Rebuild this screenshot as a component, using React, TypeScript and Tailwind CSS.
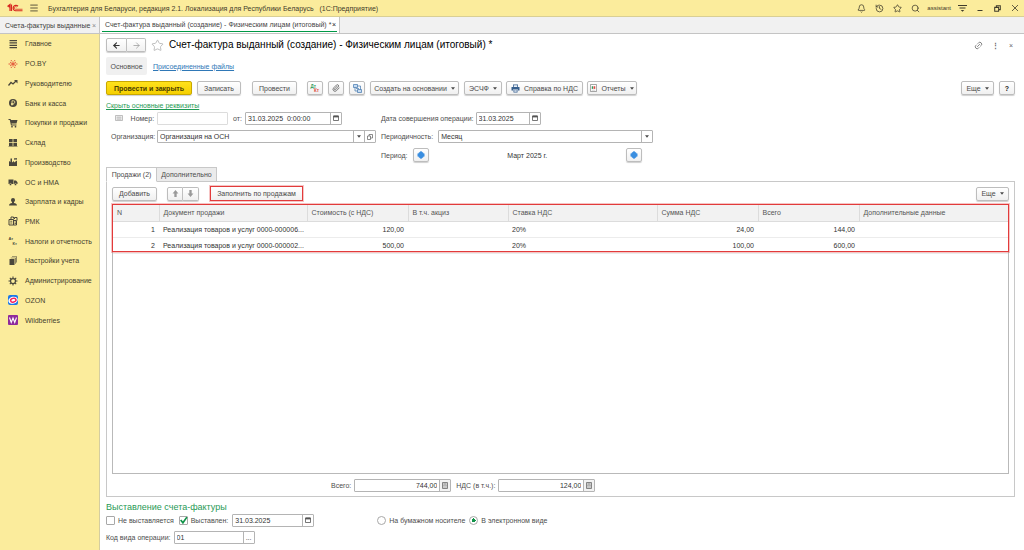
import type { ReactNode } from 'react';
import { ArrowLeft, ArrowRight, Bell, History, Link2, Menu, Paperclip, Search, Star } from 'lucide-react';

const btn =
  'flex h-[14px] shrink-0 items-center justify-center gap-1 whitespace-nowrap rounded-[2px] border border-[#bdbdbd] bg-linear-to-b from-white to-[#f0f0f0] text-[#4a4a4a] shadow-[0_1px_1px_#d0d0d0]';
const box = 'flex h-[13px] overflow-hidden rounded-[1px] border border-[#b4b4b4] bg-white';
const inner = 'flex h-full w-[11px] shrink-0 items-center justify-center border-l border-[#b4b4b4] text-[#404040]';
const field = 'h-full w-0 min-w-0 flex-1 appearance-none bg-transparent px-[2px] leading-[11px] text-[#333] outline-none';

function Caret() {
  return (
    <svg viewBox="0 0 6 4" className="h-[3px] w-[4px]" fill="#4a4a4a">
      <path d="M0 0h6L3 4z" />
    </svg>
  );
}

function CalendarIcon() {
  return (
    <svg viewBox="0 0 12 12" className="size-[6px]" fill="none" stroke="#555">
      <path d="M1 2h10v9H1z" strokeWidth="1.6" />
      <path d="M1 3h10" strokeWidth="3.6" />
    </svg>
  );
}

function CalculatorIcon() {
  return (
    <svg viewBox="0 0 12 14" className="h-[7px] w-[6px]">
      <path d="M1 1h10v12H1z" fill="#ddd" stroke="#777" strokeWidth="1.8" />
      <path d="M3 4h6M3 7h1.5M5.5 7H7M8 7h1M3 10h1.5M5.5 10H7M8 10h1" stroke="#777" strokeWidth="1.6" />
    </svg>
  );
}

function Icon({ children }: { children: ReactNode }) {
  return (
    <svg viewBox="0 0 20 20" className="size-[10px] shrink-0" fill="#4a473c" aria-hidden="true">
      {children}
    </svg>
  );
}

const sections: { name: string; icon: ReactNode }[] = [
  { name: 'Главное', icon: <path d="M3 2h15v2.4H3zM3 6.7h15v2.4H3zM3 11.4h15v2.4H3zM3 16h15v2.4H3z" /> },
  {
    name: 'PO.BY',
    icon: (
      <g stroke="#e0452f" strokeWidth="1.7" fill="#e0452f">
        <path d="M10 8V5M10 12v3M8 9 4 6M12 9l4-3M8 11l-4 3M12 11l4 3M1 10h4M15 10h4M6 2l1.500 2.500M14 2l-1.500 2.500M6 18l1.500-2.500M14 18l-1.500-2.500" />
        <circle cx="10" cy="10" r="1.6" />
      </g>
    ),
  },
  {
    name: 'Руководителю',
    icon: (
      <>
        <path d="m1 15 5-6 4 3 6-6" fill="none" stroke="#4a473c" strokeWidth="2.6" />
        <path d="M12 4h7v7z" />
      </>
    ),
  },
  {
    name: 'Банк и касса',
    icon: (
      <>
        <circle cx="10" cy="10" r="8" />
        <path d="M8 15V5.5h3a2.6 2.6 0 0 1 0 5.4H6M6 13h5" fill="none" stroke="#fbec9c" strokeWidth="1.6" />
      </>
    ),
  },
  {
    name: 'Покупки и продажи',
    icon: (
      <>
        <path d="M1 2h4l1 2h13l-2 7H7l.5 2H17v2H6L3.5 4H1z" />
        <circle cx="8" cy="17.3" r="1.7" />
        <circle cx="15" cy="17.3" r="1.7" />
      </>
    ),
  },
  { name: 'Склад', icon: <path d="M2 2h7.2v6.600H2zM10.800 2H18v6.600h-7.200zM2 10h7.200v6H2zM10.800 10H18v6h-7.200zM1 17h18v1H1z" /> },
  { name: 'Производство', icon: <path d="M2 18V8l3 2V3h3v8l4-3v3l6-4v11zM12 3c2-2 3 1 6-1v3c-3 1-4-1-6 1z" /> },
  {
    name: 'ОС и НМА',
    icon: (
      <>
        <path d="M1 5h10v9H1zM12 7h4l3 3.5V14h-7z" />
        <circle cx="5" cy="15" r="2.2" stroke="#fbec9c" />
        <circle cx="15" cy="15" r="2.2" stroke="#fbec9c" />
      </>
    ),
  },
  { name: 'Зарплата и кадры', icon: <path d="M10 2a4 4 0 0 1 4 4c0 2-1 3.500-2 4.200V12c3 .6 6 1.500 6 5H2c0-3.500 3-4.400 6-5v-1.800C7 9.500 6 8 6 6a4 4 0 0 1 4-4z" /> },
  {
    name: 'РМК',
    icon: (
      <g fill="none" stroke="#4a473c" strokeWidth="2">
        <path d="M2 7h9v11H2zM6 7V2h5v3M11 9h6v9h-6M13 6V3h5v6" />
        <path d="M4.500 10.500h4M4.500 14h4M13 12h3M13 15h3" strokeWidth="1.600" />
      </g>
    ),
  },
  {
    name: 'Налоги и отчетность',
    icon: (
      <g fontSize="8" fontWeight="700" fontFamily="Liberation Sans, sans-serif">
        <text x="1" y="8">Ат</text>
        <text x="9" y="18">Кт</text>
      </g>
    ),
  },
  { name: 'Настройки учета', icon: <path d="M8 1h10v12h-1.200V2.200H8zM5.500 3.500h10v12h-1.200V4.700H5.500zM3 6h10v12H3z" /> },
  {
    name: 'Администрирование',
    icon: (
      <g fill="none" stroke="#4a473c">
        <circle cx="10" cy="10" r="5" strokeWidth="2.500" />
        <path d="M10 1v4M10 15v4M1 10h4M15 10h4M3.600 3.600l2.800 2.800M13.600 13.600l2.800 2.800M16.400 3.600l-2.800 2.800M6.400 13.600l-2.800 2.800" strokeWidth="2.200" />
      </g>
    ),
  },
  {
    name: 'OZON',
    icon: (
      <>
        <rect width="20" height="20" rx="4" fill="#1c78e8" />
        <ellipse cx="10" cy="10.500" rx="9.500" ry="7" fill="#fff" transform="rotate(-15 10 10)" />
        <ellipse cx="10.500" cy="10.500" rx="5.500" ry="3.700" fill="#fff" stroke="#f5225f" strokeWidth="3" transform="rotate(-15 10 10)" />
      </>
    ),
  },
  {
    name: 'Wildberries',
    icon: (
      <>
        <rect width="20" height="20" rx="2" fill="#8e2a9c" />
        <path d="m3 5 3.500 10L10 6l3.500 9L17 5" fill="none" stroke="#fff" strokeWidth="2.200" />
      </>
    ),
  },
];

const columns = [
  { title: 'N', width: 'w-[46px]' },
  { title: 'Документ продажи', width: 'w-[148px]' },
  { title: 'Стоимость (с НДС)', width: 'w-[101px]' },
  { title: 'В т.ч. акциз', width: 'w-[100px]' },
  { title: 'Ставка НДС', width: 'w-[149px]' },
  { title: 'Сумма НДС', width: 'w-[101px]' },
  { title: 'Всего', width: 'w-[101px]' },
  { title: 'Дополнительные данные', width: '' },
];

const rows = [
  ['1', 'Реализация товаров и услуг 0000-000006...', '120,00', '', '20%', '24,00', '144,00', ''],
  ['2', 'Реализация товаров и услуг 0000-000002...', '500,00', '', '20%', '100,00', '600,00', ''],
];

const rightAligned = [0, 2, 5, 6];

function DateField({ id, label, value, className }: { id: string; label?: string; value: string; className: string }) {
  return (
    <div className={`${box} ${className}`}>
      <input id={id} aria-label={label} className={field} defaultValue={value} />
      <button className={inner} aria-label="Выбрать дату">
        <CalendarIcon />
      </button>
    </div>
  );
}

function Total({ id, label, value }: { id: string; label: string; value: string }) {
  return (
    <div className="flex items-center gap-[3px]">
      <label htmlFor={id}>{label}</label>
      <div className={`${box} w-[97px]`}>
        <input id={id} className={`${field} text-right`} defaultValue={value} />
        <button className={`${inner} bg-[#f2f2f2]`} aria-label="Калькулятор">
          <CalculatorIcon />
        </button>
      </div>
    </div>
  );
}

function PeriodButton({ label }: { label: string }) {
  return (
    <button className={`${btn} w-4`} aria-label={label}>
      <svg viewBox="0 0 16 16" className="size-[8px]" fill="#3a8ee0">
        <path d="M8 0 13 4v1h2v6h-2v1l-5 4-5-4v-1H1V5h2V4z" />
      </svg>
    </button>
  );
}

function TitleBar() {
  return (
    <header className="flex h-[17px] shrink-0 items-center border-b border-[#d9cf95] bg-[#fbec9c] text-[#3f3b2b]">
      <svg viewBox="0 0 32 20" className="ml-[7px] h-[10px] w-4" fill="none" stroke="#d7281f" strokeWidth="2.400" aria-label="1С">
        <path d="m1 7 5-4v13M3 8l3-2M9 3v13" />
        <path d="M22 6.500A5.500 5.500 0 1 0 17 15.500h14" />
        <path d="M19.500 8.500a2.600 2.600 0 1 0-2.500 4h14" strokeWidth="1.600" />
      </svg>
      <button className="ml-[6px]" aria-label="Меню">
        <Menu className="size-[10px]" />
      </button>
      <span className="ml-[9px] whitespace-pre">
        Бухгалтерия для Беларуси, редакция 2.1. Локализация для Республики Беларусь{'   '}(1С:Предприятие)
      </span>
      <div className="ml-auto flex items-center gap-[9px] pr-[5px]">
        <button aria-label="Уведомления"><Bell className="size-[9px]" /></button>
        <button aria-label="История"><History className="size-[9px]" /></button>
        <button aria-label="Избранное"><Star className="size-[9px]" /></button>
        <button aria-label="Поиск"><Search className="size-[9px]" /></button>
        <span className="-mx-[2px] text-[6px]">assistant</span>
        <button aria-label="Настройки">
          <svg viewBox="0 0 18 16" className="h-[8px] w-[9px]" fill="#3f3b2b">
            <path d="M0 2h18v1.800H0zM3 7h12v1.800H3zM5.500 12h7L9 15.500z" />
          </svg>
        </button>
        <button aria-label="Свернуть">
          <svg viewBox="0 0 16 16" className="size-[8px]"><path d="M3 13h10" stroke="#3f3b2b" strokeWidth="2" /></svg>
        </button>
        <button aria-label="Развернуть">
          <svg viewBox="0 0 16 16" className="size-[9px]" fill="none" stroke="#3f3b2b" strokeWidth="1.800">
            <path d="M3 6h7v7H3zM6 6V3h7v7h-3" />
          </svg>
        </button>
        <button aria-label="Закрыть">
          <svg viewBox="0 0 16 16" className="size-[8px]"><path d="m2 2 12 12M14 2 2 14" stroke="#3f3b2b" strokeWidth="1.600" /></svg>
        </button>
      </div>
    </header>
  );
}

function WindowTabs() {
  return (
    <div className="flex h-[17px] shrink-0 border-b border-[#c4c4c4] bg-[#f1f1f1] text-[#444]">
      <div className="flex w-[100px] items-center justify-between border-r border-[#c4c4c4] pr-[3px] pl-[5px]">
        <span className="whitespace-nowrap">Счета-фактуры выданные</span>
        <button className="text-[#888]" aria-label="Закрыть вкладку">×</button>
      </div>
      <div className="flex w-[240px] border-r border-[#c4c4c4] bg-white px-[2px]">
        <div className="flex h-[15px] flex-1 items-center justify-between border-b border-[#009846] pr-px pl-[3px]">
          <span className="whitespace-nowrap">Счет-фактура выданный (создание) - Физическим лицам (итоговый) *</span>
          <button className="text-[#222]" aria-label="Закрыть вкладку">×</button>
        </div>
      </div>
    </div>
  );
}

function Toolbar() {
  return (
    <div className="mt-[6px] flex items-center">
      <button className="h-[14px] w-[86px] rounded-[2px] border border-[#c9a800] bg-linear-to-b from-[#ffe21a] to-[#f5cf00] font-bold whitespace-nowrap text-[#4a3d00] shadow-[0_1px_1px_#d0d0d0]">
        Провести и закрыть
      </button>
      <button className={`${btn} ml-[5px] w-[44px]`}>Записать</button>
      <button className={`${btn} ml-[11px] w-[45px]`}>Провести</button>
      <button className={`${btn} ml-[10px] w-4`} aria-label="Дебет и кредит">
        <svg viewBox="0 0 22 20" className="h-[10px] w-[11px]" fontSize="9" fontWeight="700" fontFamily="Liberation Sans, sans-serif">
          <text x="1" y="9" fill="#2f9c5c">Дт</text>
          <text x="8" y="18" fill="#dc4b43">Кт</text>
        </svg>
      </button>
      <button className={`${btn} ml-[5px] w-4`} aria-label="Файлы">
        <Paperclip className="size-[8px]" />
      </button>
      <button className={`${btn} ml-[5px] w-4`} aria-label="Структура подчиненности">
        <svg viewBox="0 0 18 18" className="size-[9px]" fill="#c7dcf1" stroke="#336ca8" strokeWidth="1.300">
          <path d="M1 1h8v6H1zM9 11h8v6H9z" />
          <path d="M4 7v7h5M9 4h6v7M6 9h6" fill="none" />
        </svg>
      </button>
      <button className={`${btn} ml-[5px] w-[89px]`}>Создать на основании <Caret /></button>
      <button className={`${btn} ml-[5px] w-[38px]`}>ЭСЧФ <Caret /></button>
      <button className={`${btn} ml-[4px] w-[77px]`}>
        <svg viewBox="0 0 18 18" className="size-[9px]" fill="#375f8e">
          <path d="M4 1h10v5H4zM1 6h16v7h-3v-2H4v2H1zM5 12h8v5H5z" />
          <path d="M5.500 2.500h7V6h-7zM6.500 12.500h5v3h-5z" fill="#e8f0f8" />
        </svg>
        Справка по НДС
      </button>
      <button className={`${btn} ml-[4px] w-[50px]`}>
        <svg viewBox="0 0 16 18" className="h-[8px] w-[7px]">
          <path d="M1 1h14v16H1z" fill="#fff" stroke="#777" strokeWidth="1.500" />
          <path d="M4 5h3v6H4z" fill="#2f9c5c" />
          <path d="M8 5h4v6H8z" fill="#dc4b43" />
          <path d="M4 14h8" stroke="#999" />
        </svg>
        Отчеты <Caret />
      </button>
      <button className={`${btn} ml-auto w-[33px]`}>Еще <Caret /></button>
      <button className={`${btn} ml-[5px] w-4 font-bold text-[#222]`} aria-label="Справка">?</button>
    </div>
  );
}

function Details() {
  return (
    <div className="mt-px grid grid-cols-[275px_272px] items-center gap-y-[5px]">
      <div className="flex h-[14px] items-center">
        <svg viewBox="0 0 16 12" className="ml-[9px] h-[6px] w-[8px]" fill="none" stroke="#aaa" strokeWidth="1.500">
          <path d="M1 1h14v10H1zM3 4h10M3 6h10M3 8.500h10" />
        </svg>
        <label htmlFor="number" className="ml-auto">Номер:</label>
        <input id="number" className="ml-[3px] h-[13px] w-[71px] rounded-[1px] border border-[#dcdcdc] px-[2px]" />
        <label htmlFor="date" className="mr-[3px] ml-[5px]">от:</label>
        <DateField id="date" value="31.03.2025  0:00:00" className="mr-[39px] w-[97px]" />
      </div>
      <div className="flex h-[14px] items-center gap-[2px]">
        <label htmlFor="operation-date">Дата совершения операции:</label>
        <DateField id="operation-date" value="31.03.2025" className="w-[65px]" />
      </div>

      <div className="flex h-[13px] items-center pl-[5px]">
        <label htmlFor="organization" className="mr-auto">Организация:</label>
        <div className={`${box} mr-[5px] w-[219px]`}>
          <select id="organization" className={field}>
            <option>Организация на ОСН</option>
          </select>
          <span className={`${inner} pointer-events-none`}><Caret /></span>
          <button className={inner} aria-label="Открыть организацию">
            <svg viewBox="0 0 12 12" className="size-[6px]" fill="none" stroke="#666" strokeWidth="1.500">
              <path d="M1 4h6v7H1zM4 4V1h7v7H7" />
            </svg>
          </button>
        </div>
      </div>
      <div className="flex h-[13px] items-center gap-[5px]">
        <label htmlFor="frequency">Периодичность:</label>
        <div className={`${box} flex-1`}>
          <select id="frequency" className={field}>
            <option>Месяц</option>
          </select>
          <span className={`${inner} pointer-events-none`}><Caret /></span>
        </div>
      </div>

      <div className="col-start-2 flex items-center">
        <span className="mr-[5px]">Период:</span>
        <PeriodButton label="Предыдущий период" />
        <span className="flex-1 text-center text-[#333]">Март 2025 г.</span>
        <span className="mr-[11px] flex">
          <PeriodButton label="Следующий период" />
        </span>
      </div>
    </div>
  );
}

function SalesPanel() {
  return (
    <section className="flex flex-1 flex-col border border-[#c8c8c8] px-[5px] pt-[4px] pb-[4px]">
      <div className="flex items-center">
        <button className={`${btn} w-[45px]`}>Добавить</button>
        <div className="ml-[10px] flex">
          <button className={`${btn} w-4 rounded-r-none`} aria-label="Вверх">
            <svg viewBox="0 0 12 12" className="size-[7px]" fill="#999"><path d="m6 0 5 6H8v6H4V6H1z" /></svg>
          </button>
          <button className={`${btn} w-4 rounded-l-none border-l-0`} aria-label="Вниз">
            <svg viewBox="0 0 12 12" className="size-[7px]" fill="#999"><path d="m6 12 5-6H8V0H4v6H1z" /></svg>
          </button>
        </div>
        <button className="ml-[11px] h-[15px] w-[93px] border border-[#e23b3b] bg-linear-to-b from-white to-[#f0f0f0] whitespace-nowrap text-[#4a4a4a] outline outline-[#e23b3b]/30">
          Заполнить по продажам
        </button>
        <button className={`${btn} ml-auto w-[33px]`}>Еще <Caret /></button>
      </div>

      <div className="relative mt-[3px] flex-1 border border-[#b9b9b9]">
        <table className="w-full table-fixed border-collapse">
          <thead>
            <tr className="h-4 bg-[#f2f2f2]">
              {columns.map((column) => (
                <th key={column.title} className={`${column.width} border-r border-b border-[#dcdcdc] px-[4px] text-left font-normal whitespace-nowrap text-[#555] last:border-r-0`}>
                  {column.title}
                </th>
              ))}
            </tr>
          </thead>
          <tbody>
            {rows.map((row) => (
              <tr key={row[0]} className="h-4 border-b border-[#ececec] text-[#333]">
                {row.map((cell, i) => (
                  <td key={columns[i].title} className={`px-[4px] whitespace-nowrap ${rightAligned.includes(i) ? 'text-right' : 'text-left'}`}>
                    {cell}
                  </td>
                ))}
              </tr>
            ))}
          </tbody>
        </table>
        <div className="pointer-events-none absolute -inset-x-px -top-px h-[48px] border border-[#e23b3b] outline outline-[#e23b3b]/30" />
      </div>

      <div className="mt-[5px] flex items-center gap-[5px] pl-[219px]">
        <Total id="total" label="Всего:" value="744,00" />
        <Total id="vat" label="НДС (в т.ч.):" value="124,00" />
      </div>
    </section>
  );
}

function Issuing() {
  return (
    <section>
      <h2 className="mt-[4px] text-[9px] leading-[12px] text-[#1f9a55]">Выставление счета-фактуры</h2>
      <div className="flex h-[14px] items-center">
        <label className="flex items-center gap-[3px]">
          <input type="checkbox" className="size-[9px] appearance-none rounded-[1px] border border-[#a8a8a8] bg-white" />
          Не выставляется
        </label>
        <label className="ml-[5px] flex items-center gap-[3px]">
          <span className="relative flex">
            <input type="checkbox" defaultChecked className="size-[9px] appearance-none rounded-[1px] border border-[#a8a8a8] bg-white" />
            <svg viewBox="0 0 16 16" className="pointer-events-none absolute inset-0 size-[9px]" fill="none" stroke="#109348" strokeWidth="3">
              <path d="m3 7 4 5 7-10" />
            </svg>
          </span>
          Выставлен:
        </label>
        <span className="ml-[4px] flex">
          <DateField id="issued" label="Дата выставления" value="31.03.2025" className="w-[82px]" />
        </span>
        <label className="ml-[63px] flex items-center gap-[3px]">
          <input type="radio" name="medium" className="size-[9px] appearance-none rounded-full border border-[#a8a8a8] bg-white" />
          На бумажном носителе
        </label>
        <label className="ml-[4px] flex items-center gap-[3px]">
          <input type="radio" name="medium" defaultChecked className="size-[9px] appearance-none rounded-full border border-[#a8a8a8] bg-[radial-gradient(circle,#109348_2px,white_2px)]" />
          В электронном виде
        </label>
      </div>
      <div className="mt-[4px] flex items-center gap-[3px]">
        <label htmlFor="operation-code">Код вида операции:</label>
        <div className={`${box} w-[81px]`}>
          <input id="operation-code" className={field} defaultValue="01" />
          <button className={inner} aria-label="Выбрать код">...</button>
        </div>
      </div>
    </section>
  );
}

export default function App() {
  return (
    <div className="flex min-h-screen flex-col bg-white font-['Liberation_Sans',Arial,sans-serif] text-[7px] leading-[9px] text-[#4d4d4d]">
      <TitleBar />
      <WindowTabs />
      <div className="flex flex-1">
        <aside className="w-[100px] shrink-0 border-r border-[#d4cda0] bg-[#fbec9c]">
          <nav className="flex h-[296px] flex-col">
            {sections.map((section) => (
              <a key={section.name} href="#" className="flex flex-1 items-center gap-[7px] pl-2 whitespace-nowrap text-[#45412f]">
                <Icon>{section.icon}</Icon>
                {section.name}
              </a>
            ))}
          </nav>
        </aside>
        <main className="flex min-w-0 flex-1 flex-col pt-[4px] pr-[9px] pb-[6px] pl-[6px]">
          <div className="flex h-[14px] items-center">
            <button className={`${btn} w-[21px] rounded-r-none`} aria-label="Назад"><ArrowLeft className="size-[9px] text-[#333]" strokeWidth={3} /></button>
            <button className={`${btn} w-[19px] rounded-l-none border-l-0`} aria-label="Вперед"><ArrowRight className="size-[9px] text-[#999]" /></button>
            <button className="ml-[5px]" aria-label="В избранное"><Star className="size-[13px] text-[#b0b0b0]" strokeWidth={1.5} /></button>
            <h1 className="ml-[5px] text-[10px] leading-[14px] whitespace-nowrap text-black">
              Счет-фактура выданный (создание) - Физическим лицам (итоговый) *
            </h1>
            <div className="ml-auto flex items-center gap-[8px] text-[#666]">
              <button aria-label="Ссылка"><Link2 className="size-[9px] -rotate-45" /></button>
              <button aria-label="Действия" className="w-[8px] font-bold">⋮</button>
              <button aria-label="Закрыть" className="w-[8px]">×</button>
            </div>
          </div>
          <div className="mt-[5px] flex h-[18px] items-center">
            <span className="flex h-full w-[41px] items-center justify-center rounded-[2px] bg-[#f0f0f0]">Основное</span>
            <a href="#" className="ml-[6px] text-[#2f78b7] underline">Присоединенные файлы</a>
          </div>
          <Toolbar />
          <a href="#" className="mt-[6px] self-start text-[#1f9a55] underline">Скрыть основные реквизиты</a>
          <Details />
          <div role="tablist" className="relative -mb-px mt-[5px] flex h-[15px]">
            <button role="tab" aria-selected="true" className="w-[51px] border border-b-white border-[#c8c8c8] bg-white whitespace-nowrap">Продажи (2)</button>
            <button role="tab" aria-selected="false" className="w-[60px] border border-l-0 border-[#c8c8c8] bg-[#ebebeb] whitespace-nowrap">Дополнительно</button>
          </div>
          <SalesPanel />
          <Issuing />
        </main>
      </div>
    </div>
  );
}
